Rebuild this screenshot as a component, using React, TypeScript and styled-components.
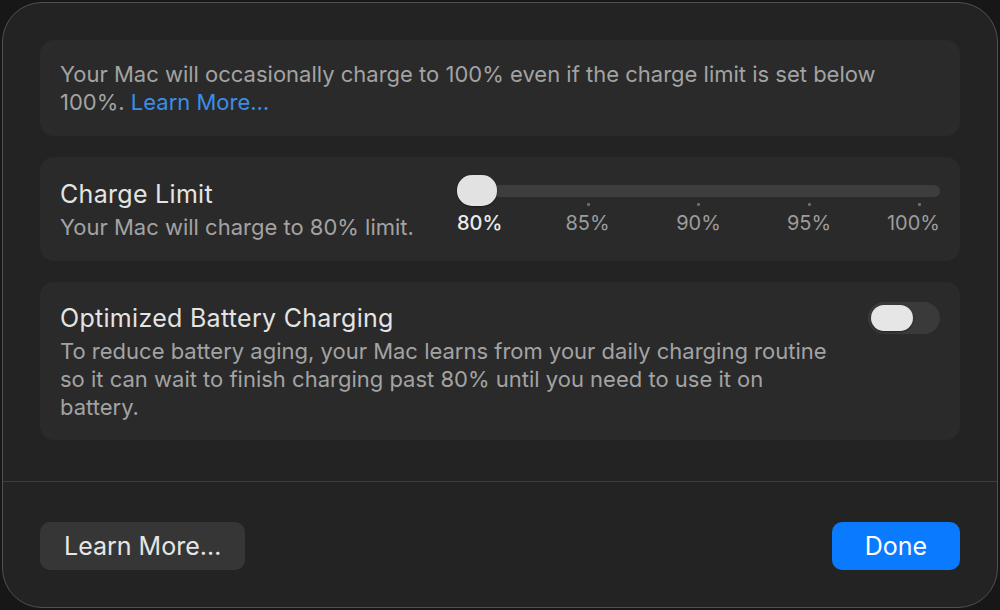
import React from "react";
import styled, { createGlobalStyle } from "styled-components";

const Global = createGlobalStyle`
  html, body { margin: 0; padding: 0; background: #171717; }
  body { font-family: Inter, "Noto Sans", sans-serif; -webkit-font-smoothing: antialiased; }
  * { box-sizing: border-box; }
`;

const Screen = styled.div`
  width: 1000px;
  height: 610px;
  padding: 2px;
  background: #171717;
`;

const Window = styled.div`
  width: 996px;
  height: 606px;
  border-radius: 40px;
  border: 1px solid #505050;
  background: #232323;
  display: flex;
  flex-direction: column;
  overflow: hidden;
`;

const Content = styled.div`
  padding: 37px 37px 0 37px;
  display: flex;
  flex-direction: column;
  gap: 21px;
`;

const Card = styled.div<{ $pad?: string }>`
  background: #2a2a2a;
  border-radius: 14px;
  padding: ${(p) => p.$pad || "20px"};
`;

const Body = styled.div`
  font-size: 22px;
  line-height: 28px;
  color: #a3a3a3;
`;

const Link = styled.span`
  color: #3b8ee8;
`;

const Title = styled.div`
  font-size: 25px;
  line-height: 32px;
  letter-spacing: 0.3px;
  color: #e4e4e4;
  margin-bottom: 3px;
`;

const Row = styled.div`
  display: grid;
  grid-template-columns: 397px 1fr;
`;

const SplitRow = styled.div`
  display: flex;
  justify-content: space-between;
  align-items: flex-start;
`;

const TextCol = styled.div`
  max-width: 790px;
`;

const Slider = styled.div`
  position: relative;
  padding-top: 7px;
`;

const Track = styled.div`
  height: 12px;
  border-radius: 6px;
  background: #3d3d3d;
`;

const Knob = styled.div`
  position: absolute;
  left: 0;
  top: -3px;
  width: 40px;
  height: 31px;
  border-radius: 15px;
  background: #e2e2e2;
  box-shadow: 0 1px 2px rgba(0, 0, 0, 0.4);
`;

const Ticks = styled.div`
  display: flex;
  justify-content: space-between;
  padding: 0 19px;
  margin-top: 6px;
  height: 3px;
`;

const Tick = styled.span<{ $hidden?: boolean }>`
  width: 3px;
  height: 3px;
  border-radius: 1px;
  background: ${(p) => (p.$hidden ? "transparent" : "#6b6b6b")};
`;

const Marks = styled.div`
  display: flex;
  margin-top: 4px;
`;

const Mark = styled.span<{ $w: number; $align: string; $active?: boolean }>`
  width: ${(p) => p.$w}px;
  text-align: ${(p) => p.$align};
  font-size: 20px;
  line-height: 26px;
  color: ${(p) => (p.$active ? "#ececec" : "#9c9c9c")};
  font-weight: ${(p) => (p.$active ? 500 : 400)};
`;

const Toggle = styled.div`
  position: relative;
  width: 72px;
  height: 32px;
  border-radius: 16px;
  background: #3a3a3a;
  flex-shrink: 0;
`;

const ToggleKnob = styled.div`
  position: absolute;
  left: 3px;
  top: 3px;
  width: 42px;
  height: 26px;
  border-radius: 13px;
  background: #e6e6e6;
  box-shadow: 0 1px 2px rgba(0, 0, 0, 0.4);
`;

const Separator = styled.div`
  height: 1px;
  background: #3c3c3c;
  margin-top: 41px;
`;

const Footer = styled.div`
  display: flex;
  justify-content: space-between;
  padding: 40px 37px 0 37px;
`;

const Button = styled.button<{ $primary?: boolean }>`
  height: 48px;
  border: none;
  border-radius: 10px;
  padding: 0 ${(p) => (p.$primary ? "32px" : "24px")};
  min-width: ${(p) => (p.$primary ? "128px" : "auto")};
  font-family: Inter, sans-serif;
  font-size: 25px;
  color: ${(p) => (p.$primary ? "#ffffff" : "#e6e6e6")};
  background: ${(p) => (p.$primary ? "#0a7aff" : "#363636")};
`;

const marks = [
  { label: "80%", w: 75, align: "left", active: true },
  { label: "85%", w: 111, align: "center" },
  { label: "90%", w: 111, align: "center" },
  { label: "95%", w: 110, align: "center" },
  { label: "100%", w: 76, align: "right" },
];

export default function App() {
  return (
    <>
      <Global />
      <Screen>
        <Window>
          <Content>
            <Card>
              <Body>
                Your Mac will occasionally charge to 100% even if the charge limit is set below
                <br />
                100%. <Link>Learn More…</Link>
              </Body>
            </Card>
            <Card $pad="21px 20px 20px 20px">
              <Row>
                <div>
                  <Title>Charge Limit</Title>
                  <Body>Your Mac will charge to 80% limit.</Body>
                </div>
                <Slider>
                  <Track />
                  <Knob />
                  <Ticks>
                    <Tick $hidden />
                    <Tick />
                    <Tick />
                    <Tick />
                    <Tick />
                  </Ticks>
                  <Marks>
                    {marks.map((m) => (
                      <Mark key={m.label} $w={m.w} $align={m.align} $active={m.active}>
                        {m.label}
                      </Mark>
                    ))}
                  </Marks>
                </Slider>
              </Row>
            </Card>
            <Card $pad="20px 20px 19px 20px">
              <SplitRow>
                <TextCol>
                  <Title>Optimized Battery Charging</Title>
                  <Body>
                    To reduce battery aging, your Mac learns from your daily charging routine
                    <br />
                    so it can wait to finish charging past 80% until you need to use it on
                    <br />
                    battery.
                  </Body>
                </TextCol>
                <Toggle>
                  <ToggleKnob />
                </Toggle>
              </SplitRow>
            </Card>
          </Content>
          <Separator />
          <Footer>
            <Button>Learn More…</Button>
            <Button $primary>Done</Button>
          </Footer>
        </Window>
      </Screen>
    </>
  );
}
